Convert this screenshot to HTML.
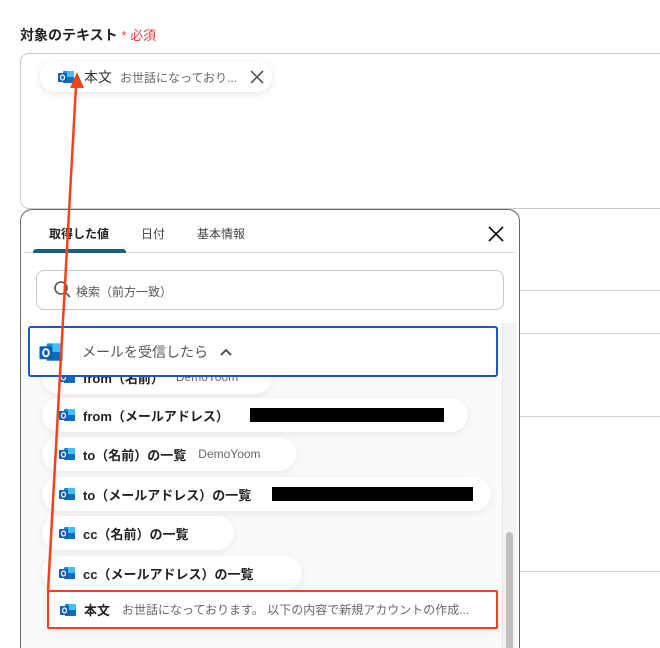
<!DOCTYPE html>
<html><head><meta charset="utf-8"><style>
*{box-sizing:border-box;margin:0;padding:0}
html,body{width:660px;height:648px;overflow:hidden}
body{background:#fff;font-family:"Liberation Sans","Noto Sans CJK JP",sans-serif;position:relative;color:#222}
.abs{position:absolute}
.hl{position:absolute;left:519px;right:0;height:1px;background:#cfd2d6}
.pill{position:absolute;background:#fff;border-radius:18px;box-shadow:0 2px 8px rgba(0,0,0,.08);height:34px;display:flex;align-items:center;padding-left:16px;font-size:13px;font-weight:bold;white-space:nowrap}
.pill .ic{margin-right:7px}
.sub{font-weight:normal;color:#666;font-size:12px;margin-left:12px}
.blk{position:absolute;background:#000;height:14px}
</style></head><body>
<svg width="0" height="0" style="position:absolute"><defs>
<symbol id="ol" viewBox="0 0 18 18"><rect x="6" y="3" width="11" height="12" rx="1" fill="#1490df"/><rect x="10" y="3" width="7" height="6" fill="#50d9ff" opacity=".7"/><rect x="6" y="9" width="11" height="6" fill="#0a64b4" opacity=".8"/><rect x="1" y="5" width="9" height="9" rx="1" fill="#0f5fb8"/><ellipse cx="5.5" cy="9.5" rx="2" ry="2.5" fill="none" stroke="#fff" stroke-width="1.3"/></symbol>
</defs></svg>

<div class="abs" style="left:20px;top:25px;font-size:14px;font-weight:bold">対象のテキスト <span style="color:#e8403a;font-weight:normal;font-size:13px">* 必須</span></div>
<div class="abs" style="left:20px;top:53px;width:660px;height:156px;border:1px solid #c8ccd2;border-radius:9px"></div>
<div class="abs" style="left:40px;top:62px;width:232px;height:30px;border-radius:15px;background:#fff;box-shadow:0 2px 8px rgba(0,0,0,.1);display:flex;align-items:center;padding-left:17px;font-size:14px;white-space:nowrap">
<svg class="ic" width="18" height="18"><use href="#ol"/></svg><span style="margin-left:9px;color:#333">本文</span><span style="margin-left:8px;color:#666;font-size:12px">お世話になっており...</span>
<svg class="abs" style="left:210px;top:8px" width="14" height="14"><path d="M1 1L13 13M13 1L1 13" stroke="#555" stroke-width="1.6"/></svg></div>

<div class="hl" style="top:290px"></div><div class="hl" style="top:333px"></div><div class="hl" style="top:416px"></div><div class="hl" style="top:571px"></div>

<div class="abs" style="left:20px;top:209px;width:500px;height:439px;border:1px solid #666;border-bottom:none;border-radius:12px 12px 0 0;background:#fff;overflow:hidden">
 <div class="abs" style="left:28px;top:15px;font-size:12px;font-weight:bold">取得した値</div>
 <div class="abs" style="left:120px;top:15px;font-size:12px;color:#444">日付</div>
 <div class="abs" style="left:176px;top:15px;font-size:12px;color:#444">基本情報</div>
 <svg class="abs" style="left:467px;top:16px" width="16" height="16"><path d="M1 1L15 15M15 1L1 15" stroke="#111" stroke-width="1.7"/></svg>
 <div class="abs" style="left:3px;top:42px;width:492px;height:1px;background:#ddd"></div>
 <div class="abs" style="left:12px;top:39px;width:93px;height:4px;background:#1f5f7a;border-radius:3px 3px 0 0"></div>
 <div class="abs" style="left:15px;top:60px;width:468px;height:40px;border:1px solid #c8c8c8;border-radius:8px"></div>
 <svg class="abs" style="left:32px;top:70px" width="20" height="20"><circle cx="8" cy="8" r="6" fill="none" stroke="#555" stroke-width="1.6"/><line x1="12.5" y1="12.5" x2="17" y2="17" stroke="#555" stroke-width="1.6"/></svg>
 <div class="abs" style="left:55px;top:73px;font-size:12px;color:#555">検索（前方一致）</div>
 <div class="abs" style="left:0;top:113px;width:498px;height:330px;background:#fafafa"></div>
 <div class="abs" style="left:481px;top:113px;width:14px;height:330px;background:#f3f3f3;border-left:1px solid #e6e6e6"></div>
 <div class="abs" style="left:485px;top:322px;width:7px;height:130px;background:#c1c1c1;border-radius:4px"></div>
</div>

<div class="pill" style="left:42px;top:360px;width:230px"><svg class="ic" width="18" height="18"><use href="#ol"/></svg>from（名前）<span class="sub">DemoYoom</span></div>
<div class="abs" style="left:28px;top:326px;width:470px;height:51px;border:2px solid #1a56c4;border-radius:3px;background:#fff;display:flex;align-items:center;padding-left:8px;font-size:14px;color:#555">
<svg width="26" height="26"><use href="#ol"/></svg><span style="margin-left:18px">メールを受信したら</span>
<svg style="margin-left:12px" width="12" height="8"><path d="M1 7L6 2L11 7" fill="none" stroke="#444" stroke-width="1.8"/></svg></div>

<div class="pill" style="left:42px;top:398px;width:426px"><svg class="ic" width="18" height="18"><use href="#ol"/></svg>from（メールアドレス）</div>
<div class="blk" style="left:250px;top:408px;width:194px"></div>
<div class="pill" style="left:42px;top:437px;width:254px"><svg class="ic" width="18" height="18"><use href="#ol"/></svg>to（名前）の一覧<span class="sub">DemoYoom</span></div>
<div class="pill" style="left:42px;top:477px;width:449px"><svg class="ic" width="18" height="18"><use href="#ol"/></svg>to（メールアドレス）の一覧</div>
<div class="blk" style="left:272px;top:487px;width:201px"></div>
<div class="pill" style="left:42px;top:516px;width:192px"><svg class="ic" width="18" height="18"><use href="#ol"/></svg>cc（名前）の一覧</div>
<div class="pill" style="left:42px;top:556px;width:260px"><svg class="ic" width="18" height="18"><use href="#ol"/></svg>cc（メールアドレス）の一覧</div>
<div class="pill" style="left:47px;top:590px;width:451px;height:39px;border:2px solid #f0421c;border-radius:2px;padding-left:10px"><svg class="ic" width="18" height="18"><use href="#ol"/></svg>本文<span class="sub">お世話になっております。 以下の内容で新規アカウントの作成...</span></div>

<svg class="abs" style="left:0;top:0" width="660" height="648"><line x1="48" y1="591" x2="76" y2="86" stroke="#f0421c" stroke-width="2.5"/><polygon points="77,72 70,88 84,88" fill="#f0421c"/></svg>
</body></html>
